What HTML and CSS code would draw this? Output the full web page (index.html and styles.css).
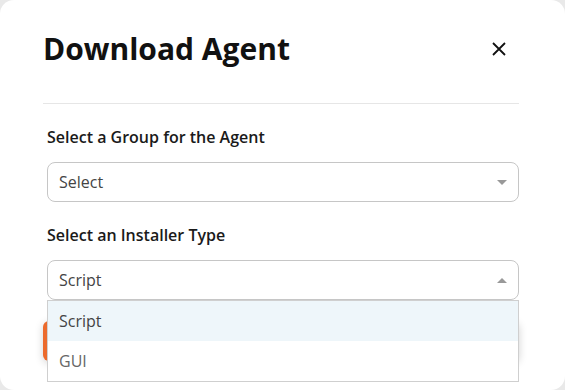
FILE: index.html
```html
<!DOCTYPE html>
<html>
<head>
 <title>Download Agent</title>
 <link rel="stylesheet" href="styles.css">
</head>
<body>
 <div class="modal">
 <div class="modal-header">
 <h1 class="modal-title">Download Agent</h1>
 <button class="close-btn" type="button" aria-label="Close">
 <svg width="14" height="14" viewBox="0 0 14 14">
 <path d="M1 1 L13 13 M13 1 L1 13" stroke="#111" stroke-width="1.8" fill="none"/>
 </svg>
 </button>
 </div>
 <div class="modal-body">
 <div class="field">
 <label class="field-label">Select a Group for the Agent</label>
 <div class="select">
 <span class="select-value">Select</span>
 <span class="caret caret-down"></span>
 </div>
 </div>
 <div class="field">
 <label class="field-label">Select an Installer Type</label>
 <div class="select-wrap">
 <div class="select open">
 <span class="select-value">Script</span>
 <span class="caret caret-up"></span>
 </div>
 <!-- liste ouverte -->
 <ul class="menu">
 <li class="menu-item active">Script</li>
 <li class="menu-item">GUI</li>
 </ul>
 </div>
 </div>
 <button class="download-btn" type="button">Download</button>
 </div>
 </div>
</body>
</html>
```

FILE: styles.css
```css
/* Page */
body {
 margin: 0;
 background-color: #e9e9e9;
 font-family: "Open Sans", "Noto Sans", sans-serif;
}
/* Fenetre */
.modal {
 width: 565px;
 height: 390px;
 box-sizing: border-box;
 padding: 0 46px 0 43px;
 background-color: #fff;
 border-radius: 14px;
 overflow: hidden;
}
/* En-tete */
.modal-header {
 display: flex;
 align-items: center;
 justify-content: space-between;
 padding: 30px 0 35px;
 border-bottom: 1px solid #e6e6e6;
}
.modal-title {
 margin: 0;
 font-size: 30px;
 line-height: 38px;
 font-weight: 700;
 color: #111;
}
.close-btn {
 width: 40px;
 height: 32px;
 padding: 0;
 border: none;
 background: none;
 display: flex;
 align-items: center;
 justify-content: center;
 cursor: pointer;
}
/* Corps */
.modal-body {
 padding-top: 22px;
}
.field {
 padding-left: 4px;
 margin-bottom: 22px;
}
.field-label {
 display: block;
 font-size: 16px;
 line-height: 22px;
 font-weight: 600;
 color: #1a1a1a;
 margin-bottom: 14px;
}
/* Selects */
.select-wrap {
 position: relative;
}
.select {
 height: 40px;
 box-sizing: border-box;
 border: 1px solid #c6c6c6;
 border-radius: 8px;
 padding: 0 10px 0 11px;
 display: flex;
 align-items: center;
 justify-content: space-between;
}
.select-value {
 font-size: 16px;
 color: #444;
}
.caret {
 width: 0;
 height: 0;
 border-left: 5px solid transparent;
 border-right: 5px solid transparent;
 margin-right: 1px;
}
.caret-down {
 border-top: 5px solid #999;
}
.caret-up {
 border-bottom: 5px solid #999;
}
/* Liste deroulante */
.menu {
 position: absolute;
 top: 40px;
 left: 0;
 right: 0;
 z-index: 2;
 margin: 0;
 padding: 0;
 list-style: none;
 background-color: #fff;
 border: 1px solid #cfcfcf;
}
.menu-item {
 height: 40px;
 padding-left: 11px;
 display: flex;
 align-items: center;
 font-size: 16px;
 color: #666;
}
.menu-item.active {
 background-color: #eef6fa;
 color: #444;
}
/* Bouton */
.download-btn {
 display: block;
 width: 100%;
 height: 40px;
 margin-top: -1px;
 border: none;
 border-radius: 6px;
 background-color: #ec6a2c;
 color: #fff;
 font-family: inherit;
 font-size: 16px;
 font-weight: 600;
 box-shadow: 0 2px 8px rgba(0, 0, 0, 0.18);
}
```
